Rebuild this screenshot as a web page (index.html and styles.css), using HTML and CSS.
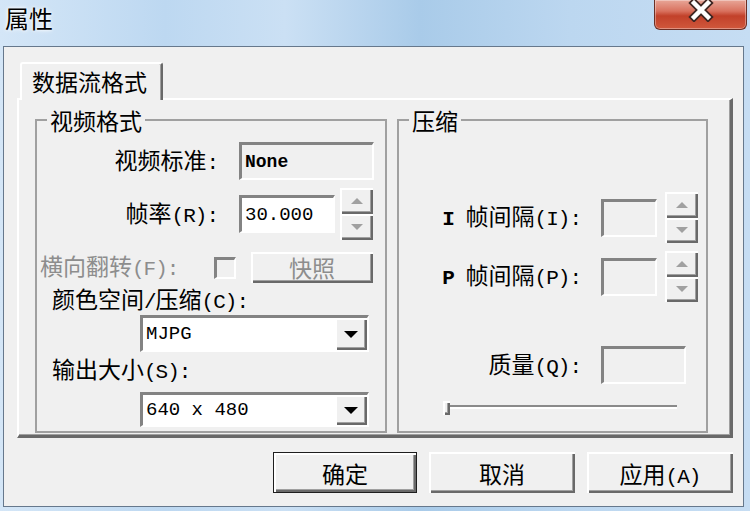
FILE: index.html
```html
<!DOCTYPE html>
<html lang="zh-CN">
<head>
    <meta charset="UTF-8">
    <title>属性</title>
    <link rel="stylesheet" href="styles.css">
</head>
<body>
    <div class="window">
        <div class="titlebar">
            <span class="title">属性</span>
            <button class="close" type="button">
                <svg width="28" height="22" viewBox="0 0 28 22">
                    <path d="M7 3 L21 17 M21 3 L7 17" stroke="#3d2622" stroke-width="8" stroke-linecap="square" fill="none"/>
                    <path d="M7 3 L21 17 M21 3 L7 17" stroke="#fff" stroke-width="4.5" stroke-linecap="square" fill="none"/>
                </svg>
            </button>
        </div>

        <div class="client">
            <div class="tab">数据流格式</div>
            <div class="tab-page">
                <fieldset class="group group-video">
                    <legend>视频格式</legend>

                    <div class="row row-std">
                        <span class="lbl lbl-video">视频标准<span class="half">:</span></span>
                        <div class="field field-ro field-std"><span class="mono mono-bold">None</span></div>
                    </div>

                    <div class="row row-fps">
                        <span class="lbl lbl-video">帧率<span class="half">(R):</span></span>
                        <div class="field field-fps"><span class="mono">30.000</span></div>
                        <div class="spin">
                            <div class="spin-btn"><i class="arrow-up"></i></div>
                            <div class="spin-btn"><i class="arrow-down"></i></div>
                        </div>
                    </div>

                    <div class="row row-flip">
                        <span class="lbl lbl-flip disabled">横向翻转<span class="half">(F):</span></span>
                        <div class="check"></div>
                        <div class="raised snap disabled">快照</div>
                    </div>

                    <div class="lbl lbl-block lbl-cs">颜色空间<span class="half">/</span>压缩<span class="half">(C):</span></div>
                    <div class="field combo combo-cs">
                        <span class="mono">MJPG</span>
                        <div class="raised drop"><i class="arrow-drop"></i></div>
                    </div>

                    <div class="lbl lbl-block lbl-size">输出大小<span class="half">(S):</span></div>
                    <div class="field combo combo-size">
                        <span class="mono">640 x 480</span>
                        <div class="raised drop"><i class="arrow-drop"></i></div>
                    </div>
                </fieldset>

                <fieldset class="group group-compress">
                    <legend>压缩</legend>

                    <div class="row row-key">
                        <span class="lbl lbl-comp"><span class="half latin">I </span>帧间隔<span class="half">(I):</span></span>
                        <div class="field field-ro field-small"></div>
                        <div class="spin">
                            <div class="spin-btn"><i class="arrow-up"></i></div>
                            <div class="spin-btn"><i class="arrow-down"></i></div>
                        </div>
                    </div>

                    <div class="row row-pframe">
                        <span class="lbl lbl-comp"><span class="half latin">P </span>帧间隔<span class="half">(P):</span></span>
                        <div class="field field-ro field-small"></div>
                        <div class="spin">
                            <div class="spin-btn"><i class="arrow-up"></i></div>
                            <div class="spin-btn"><i class="arrow-down"></i></div>
                        </div>
                    </div>

                    <div class="row row-quality">
                        <span class="lbl lbl-comp">质量<span class="half">(Q):</span></span>
                        <div class="field field-ro field-quality"></div>
                    </div>

                    <div class="slider">
                        <div class="track"></div>
                        <div class="raised thumb"></div>
                    </div>
                </fieldset>
            </div>

            <div class="buttons">
                <button class="btn btn-default" type="button">确定</button>
                <button class="btn" type="button">取消</button>
                <button class="btn" type="button">应用<span class="half">(A)</span></button>
            </div>
        </div>
    </div>
</body>
</html>
```

FILE: styles.css
```css
* {
    box-sizing: border-box;
}

body {
    margin: 0;
    width: 750px;
    height: 511px;
    overflow: hidden;
    font-family: "Noto Sans CJK SC", "Liberation Sans", sans-serif;
    font-size: 23px;
    color: #000;
}

/* window frame */
.window {
    height: 511px;
    display: flex;
    flex-direction: column;
    padding: 0 6px 4px 3px;
    background: linear-gradient(90deg, #d4e6f7 0%, #bdd8f1 22%, #cbe0f4 38%, #a9cbe9 56%, #bcd7f0 76%, #c6ddf3 100%);
}

.titlebar {
    height: 46px;
    flex-shrink: 0;
    display: flex;
    justify-content: space-between;
    align-items: flex-start;
}

.title {
    padding: 1px 0 0 2px;
    font-size: 24px;
    line-height: 34px;
    text-shadow: 0 0 5px #fff, 0 0 3px #fff;
}

.close {
    width: 93px;
    height: 30px;
    margin-right: -3px;
    padding: 0;
    display: flex;
    justify-content: center;
    align-items: flex-start;
    border: 1px solid #6b2f25;
    border-top: none;
    border-radius: 0 0 6px 6px;
    background: linear-gradient(#e8a698 0%, #d9725f 38%, #c2412a 55%, #d0583c 100%);
    box-shadow: inset 0 0 0 1px rgba(255, 255, 255, 0.35);
}

/* dialog body */
.client {
    flex: 1;
    background: #f0f0f0;
    border: 1px solid #66788c;
    padding: 15px 10px 0 13px;
}

.tab {
    position: relative;
    width: 143px;
    height: 38px;
    margin: 0 0 -2px 3px;
    padding: 2px 0 0 10px;
    background: #f0f0f0;
    border-top: 2px solid #fff;
    border-left: 2px solid #fff;
    border-right: 2px solid #696969;
    border-radius: 3px 3px 0 0;
    box-shadow: inset -1px 0 #a0a0a0;
    line-height: 30px;
}

.tab-page {
    width: 716px;
    height: 340px;
    display: flex;
    align-items: flex-start;
    gap: 10px;
    padding: 7px 0 0 16px;
    border-style: solid;
    border-width: 2px 3px 3px 2px;
    border-color: #fff #696969 #696969 #fff;
    box-shadow: inset -1px -1px #a0a0a0;
}

/* group boxes */
.group {
    margin: 0;
    padding: 0;
    min-width: 0;
    height: 326px;
    border: 2px solid #a0a0a0;
}

.group legend {
    margin-left: 10px;
    padding: 0 3px;
    line-height: 26px;
}

.group-video {
    width: 352px;
}

.group-compress {
    width: 311px;
}

.row {
    display: flex;
    align-items: center;
}

.lbl {
    line-height: 26px;
    white-space: pre;
}

/* half-width latin inside labels */
.half {
    font-family: "Liberation Mono", monospace;
    font-size: 21px;
    letter-spacing: -1px;
}

.latin {
    font-weight: bold;
}

.disabled {
    color: #8d8d8d;
}

.mono {
    font-family: "Liberation Mono", monospace;
    font-size: 19px;
    padding-left: 3px;
}

.mono-bold {
    font-weight: bold;
    font-size: 18px;
}

/* sunken edit boxes */
.field {
    border-style: solid;
    border-width: 3px 2px 2px 3px;
    border-color: #838383 #fff #fff #838383;
    background: #fff;
    display: flex;
    align-items: center;
}

.field-ro {
    background: #f0f0f0;
}

/* raised 3d controls */
.raised,
.spin-btn,
.btn {
    background: #f0f0f0;
    box-shadow: inset 2px 2px #fff, inset -2px -2px #696969, inset -3px -3px #a0a0a0;
}

.spin {
    width: 33px;
    height: 52px;
    margin-left: 5px;
    display: flex;
    flex-direction: column;
}

.spin-btn {
    flex: 1;
    display: flex;
    justify-content: center;
    align-items: center;
}

.arrow-up,
.arrow-down {
    width: 0;
    height: 0;
    border-left: 6px solid transparent;
    border-right: 6px solid transparent;
}

.arrow-up {
    border-bottom: 6px solid #a0a0a0;
}

.arrow-down {
    border-top: 6px solid #a0a0a0;
}

/* video format group */
.lbl-video {
    width: 193px;
    text-align: right;
    padding-right: 12px;
    margin-right: 9px;
}

.row-std {
    margin-top: 9px;
    height: 38px;
}

.field-std {
    width: 135px;
    height: 38px;
}

.row-fps {
    margin-top: 8px;
    height: 52px;
}

.field-fps {
    width: 96px;
    height: 38px;
}

.row-flip {
    margin-top: 12px;
    height: 31px;
}

.lbl-flip {
    width: 174px;
    margin-left: 3px;
}

.check {
    width: 22px;
    height: 22px;
    border-style: solid;
    border-width: 3px 2px 2px 3px;
    border-color: #838383 #fff #fff #838383;
    background: #f0f0f0;
}

.snap {
    width: 122px;
    height: 31px;
    margin-left: 15px;
    text-align: center;
    line-height: 30px;
}

.lbl-block {
    padding-left: 15px;
    height: 26px;
}

.lbl-cs {
    margin-top: 2px;
}

.combo {
    width: 229px;
    margin-left: 103px;
    justify-content: space-between;
}

.combo-cs {
    margin-top: 4px;
    height: 37px;
}

.lbl-size {
    margin-top: 3px;
}

.combo-size {
    margin-top: 11px;
    height: 35px;
}

.drop {
    width: 32px;
    height: 100%;
    display: flex;
    justify-content: center;
    align-items: center;
}

.arrow-drop {
    width: 0;
    height: 0;
    border-left: 7px solid transparent;
    border-right: 7px solid transparent;
    border-top: 7px solid #000;
}

/* compression group */
.lbl-comp {
    width: 190px;
    text-align: right;
    padding-right: 8px;
    margin-right: 12px;
}

.row-key {
    margin-top: 59px;
    height: 51px;
}

.row-pframe {
    margin-top: 8px;
    height: 51px;
}

.field-small {
    width: 56px;
    height: 38px;
}

.row-key .spin,
.row-pframe .spin {
    margin-left: 8px;
    height: 51px;
}

.row-quality {
    margin-top: 44px;
    height: 38px;
}

.field-quality {
    width: 85px;
    height: 38px;
}

.slider {
    position: relative;
    width: 234px;
    height: 14px;
    margin: 17px 0 0 44px;
}

.track {
    position: absolute;
    left: 0;
    right: 0;
    top: 4px;
    height: 4px;
    border-top: 2px solid #8a8a8a;
    border-bottom: 2px solid #fff;
}

.thumb {
    position: absolute;
    left: 0;
    top: 0;
    width: 7px;
    height: 14px;
}

/* dialog buttons */
.buttons {
    display: flex;
    justify-content: flex-end;
    gap: 12px;
    margin-top: 14px;
}

.btn {
    width: 146px;
    height: 41px;
    padding: 0;
    border: none;
    font-family: "Noto Sans CJK SC", "Liberation Sans", sans-serif;
    font-size: 23px;
    color: #000;
}

.btn-default {
    width: 144px;
    border: 1px solid #1e1e1e;
}
```
